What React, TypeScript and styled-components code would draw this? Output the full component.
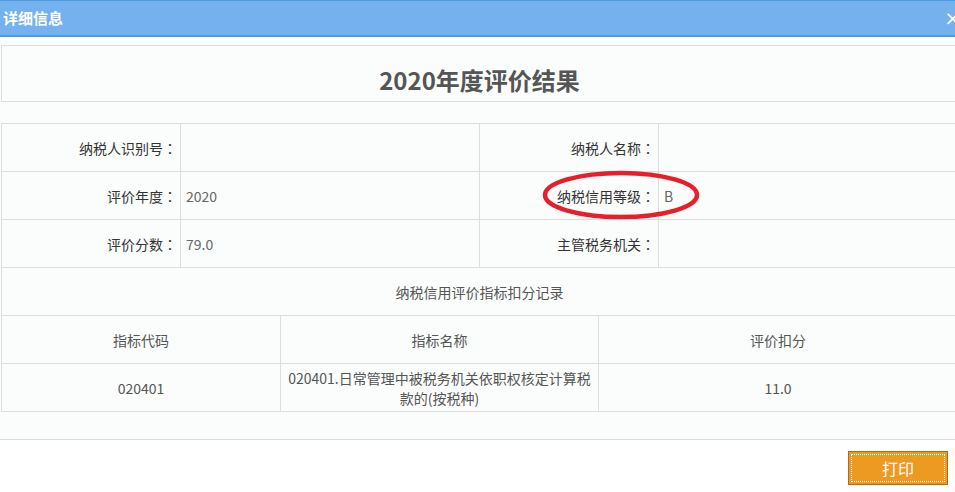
import React, { FC } from 'react'
import styled, { createGlobalStyle } from 'styled-components'

const GlobalStyle = createGlobalStyle`
  html, body {
    margin: 0;
    padding: 0;
    background: #ffffff;
  }
  body {
    font-family: "Noto Sans CJK SC", "Liberation Sans", sans-serif;
  }
`

type TInfoRow = {
  leftLabel: string,
  leftValue: string,
  rightLabel: string,
  rightValue: string,
  marked?: boolean,
}

const infoRows: TInfoRow[] = [
  { leftLabel: '纳税人识别号', leftValue: '', rightLabel: '纳税人名称', rightValue: '' },
  { leftLabel: '评价年度', leftValue: '2020', rightLabel: '纳税信用等级', rightValue: 'B', marked: true },
  { leftLabel: '评价分数', leftValue: '79.0', rightLabel: '主管税务机关', rightValue: '' },
]

type TDeduction = { code: string, name: string, score: string }

const deductions: TDeduction[] = [
  { code: '020401', name: '020401.日常管理中被税务机关依职权核定计算税款的(按税种)', score: '11.0' },
]

const RedMark: FC = () => (
  <S.Mark width="162" height="52" viewBox="0 0 162 52">
    <ellipse cx="80" cy="25" rx="76" ry="22" fill="none" stroke="#e81e28" strokeWidth="4.5" />
  </S.Mark>
)

export default function App() {
  return (
    <S.Dialog>
      <GlobalStyle />
      <S.TitleBar>
        <S.TitleText>详细信息</S.TitleText>
        <S.Close>×</S.Close>
      </S.TitleBar>
      <S.Body>
        <S.Heading>2020年度评价结果</S.Heading>
        <S.Table>
          <colgroup>
            <col style={{ width: 179 }} />
            <col style={{ width: 299 }} />
            <col style={{ width: 179 }} />
            <col style={{ width: 299 }} />
          </colgroup>
          <tbody>
            {infoRows.map((row) => (
              <tr key={row.leftLabel}>
                <S.Label>{row.leftLabel}<S.Colon>：</S.Colon></S.Label>
                <S.Value>{row.leftValue}</S.Value>
                <S.Label>
                  {row.marked && <RedMark />}
                  {row.rightLabel}<S.Colon>：</S.Colon>
                </S.Label>
                <S.Value>{row.rightValue}</S.Value>
              </tr>
            ))}
            <tr>
              <S.Center colSpan={4}>纳税信用评价指标扣分记录</S.Center>
            </tr>
          </tbody>
        </S.Table>
        <S.Table $noTop>
          <colgroup>
            <col style={{ width: 279 }} />
            <col style={{ width: 318 }} />
            <col style={{ width: 359 }} />
          </colgroup>
          <tbody>
            <tr>
              <S.Center>指标代码</S.Center>
              <S.Center>指标名称</S.Center>
              <S.Center>评价扣分</S.Center>
            </tr>
            {deductions.map((d) => (
              <tr key={d.code}>
                <S.Center>{d.code}</S.Center>
                <S.Center $wrap>{d.name}</S.Center>
                <S.Center>{d.score}</S.Center>
              </tr>
            ))}
          </tbody>
        </S.Table>
      </S.Body>
      <S.Footer>
        <S.PrintButton>打印</S.PrintButton>
      </S.Footer>
    </S.Dialog>
  )
}

const S = {
  Dialog: styled.div`
    width: 955px;
    height: 492px;
    overflow: hidden;
    background: #ffffff;
  `,
    TitleBar: styled.div`
      box-sizing: border-box;
      height: 37px;
      display: flex;
      align-items: center;
      justify-content: space-between;
      background: #74b1ee;
      border-top: 1px solid #4b9be2;
      border-bottom: 2px solid #4b9be2;
      padding: 0 0 0 3px;
    `,
      TitleText: styled.span`
        color: #ffffff;
        font-size: 15px;
        font-weight: bold;
        line-height: 20px;
      `,
      Close: styled.span`
        color: #ffffff;
        font-family: "DejaVu Sans", sans-serif;
        font-size: 20px;
        line-height: 20px;
        margin-right: -6px;
      `,
    Body: styled.div`
      background: #fbfcfc;
      padding: 8px 0 27px 1px;
      border-bottom: 1px solid #dddddd;
    `,
      Heading: styled.div`
        box-sizing: border-box;
        width: 957px;
        height: 57px;
        padding-top: 18px;
        border: 1px solid #dddddd;
        margin-bottom: 21px;
        text-align: center;
        color: #555555;
        font-size: 24px;
        font-weight: bold;
        line-height: 32px;
      `,
      Table: styled.table<{ $noTop?: boolean }>`
        width: 957px;
        table-layout: fixed;
        border-collapse: collapse;
        font-size: 14px;
        ${(p) => p.$noTop && 'margin-top: -1px;'}
        td {
          border: 1px solid #dddddd;
          height: 48px;
          padding: 0;
          box-sizing: border-box;
        }
      `,
        Label: styled.td`
          position: relative;
          text-align: right;
          padding-right: 3px !important;
          color: #333333;
        `,
          Colon: styled.span`
            font-family: "Noto Sans CJK TC", sans-serif;
          `,
        Value: styled.td`
          text-align: left;
          padding-left: 5px !important;
          color: #666666;
        `,
        Center: styled.td<{ $wrap?: boolean }>`
          text-align: center;
          color: #555555;
          line-height: 20px;
          ${(p) => p.$wrap && 'padding: 0 3px !important;'}
        `,
        Mark: styled.svg`
          position: absolute;
          left: 61px;
          top: -2px;
          pointer-events: none;
        `,
    Footer: styled.div`
      display: flex;
      justify-content: flex-end;
      padding: 11px 7px 0 0;
      background: #ffffff;
    `,
      PrintButton: styled.button`
        width: 100px;
        height: 34px;
        background: #ed9a22;
        border: 1px solid #a86c16;
        outline: 1px dotted #ffffff;
        outline-offset: -4px;
        color: #ffffff;
        font-family: "Noto Sans CJK SC", sans-serif;
        font-size: 16px;
        cursor: pointer;
      `,
}
